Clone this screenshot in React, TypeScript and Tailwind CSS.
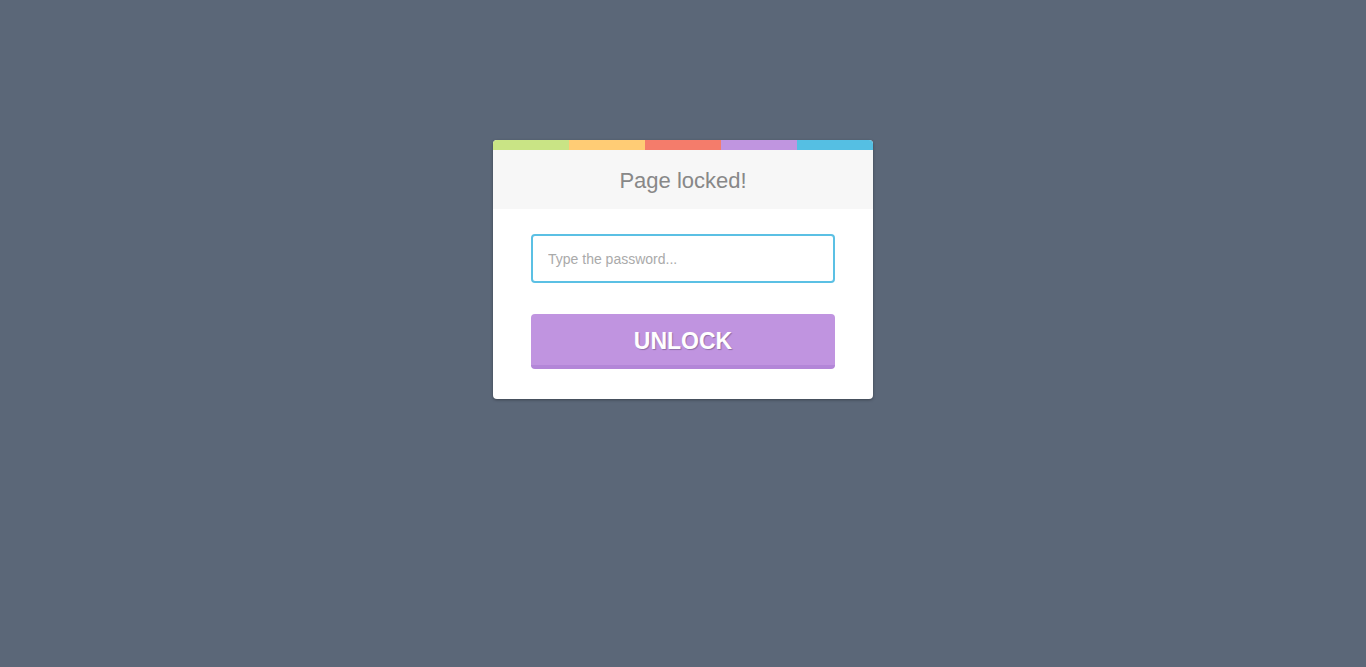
export default function App() {
  return (
    <div className="min-h-screen bg-[#5b6778] font-['Liberation_Sans',Arial,sans-serif]">
      <div className="pt-[140px] flex justify-center">
        <div className="w-[380px] bg-white rounded-[4px] overflow-hidden shadow-[0_1px_3px_rgba(0,0,0,0.35)]">
          {/* stripe */}
          <div className="flex h-[10px]">
            <div className="flex-1 bg-[#c9e485]" />
            <div className="flex-1 bg-[#ffcc75]" />
            <div className="flex-1 bg-[#f47c6b]" />
            <div className="flex-1 bg-[#c095e0]" />
            <div className="flex-1 bg-[#55bfe3]" />
          </div>

          <div className="h-[59px] bg-[#f7f7f7] flex items-center justify-center">
            <h1 className="text-[22px] text-[#888888] leading-none pt-[2px]">Page locked!</h1>
          </div>

          <div className="px-[38px] pt-[25px] pb-[30px]">
            <input
              type="password"
              placeholder="Type the password..."
              className="w-full h-[49px] border-2 border-[#5bc0e4] rounded-[4px] px-[15px] text-[14px] text-[#555] placeholder:text-[#aaaaaa] outline-none"
            />
            <button className="mt-[31px] w-full h-[55px] bg-[#c094e0] border-b-4 border-[#b386d8] rounded-[4px] text-white text-[23px] font-bold pt-[4px] [text-shadow:1px_1px_1px_rgba(0,0,0,0.25)]">
              UNLOCK
            </button>
          </div>
        </div>
      </div>
    </div>
  );
}
